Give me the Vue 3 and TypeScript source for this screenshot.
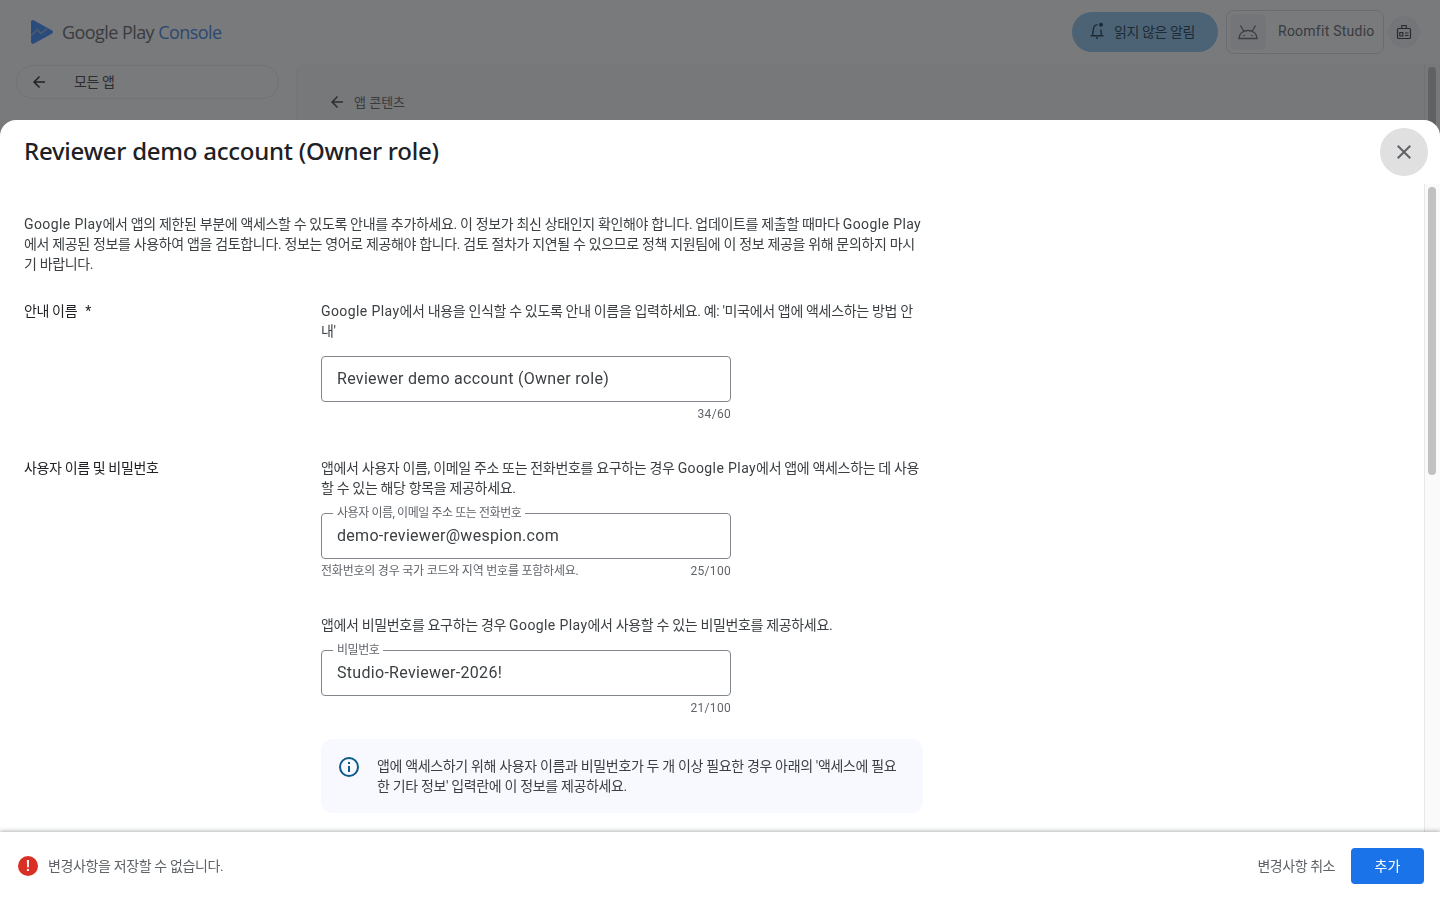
<script setup lang="ts">
interface Field {
  help: string
  label?: string
  value: string
  hint?: string
  count: string
}

const intro =
  'Google Play에서 앱의 제한된 부분에 액세스할 수 있도록 안내를 추가하세요. 이 정보가 최신 상태인지 확인해야 합니다. 업데이트를 제출할 때마다 Google Play에서 제공된 정보를 사용하여 앱을 검토합니다. 정보는 영어로 제공해야 합니다. 검토 절차가 지연될 수 있으므로 정책 지원팀에 이 정보 제공을 위해 문의하지 마시기 바랍니다.'

const nameField: Field = {
  help: "Google Play에서 내용을 인식할 수 있도록 안내 이름을 입력하세요. 예: '미국에서 앱에 액세스하는 방법 안\n내'",
  value: 'Reviewer demo account (Owner role)',
  count: '34/60',
}

const credentials: Field[] = [
  {
    help: '앱에서 사용자 이름, 이메일 주소 또는 전화번호를 요구하는 경우 Google Play에서 앱에 액세스하는 데 사용\n할 수 있는 해당 항목을 제공하세요.',
    label: '사용자 이름, 이메일 주소 또는 전화번호',
    value: 'demo-reviewer@wespion.com',
    hint: '전화번호의 경우 국가 코드와 지역 번호를 포함하세요.',
    count: '25/100',
  },
  {
    help: '앱에서 비밀번호를 요구하는 경우 Google Play에서 사용할 수 있는 비밀번호를 제공하세요.',
    label: '비밀번호',
    value: 'Studio-Reviewer-2026!',
    count: '21/100',
  },
]

// latin runs sit wider than the hangul around them, \n is a forced line end
function runs(text: string): string[] {
  return text.split(/(Google Play|\n)/u).filter(Boolean)
}
</script>

<template>
  <div class="page">
    <header class="topbar">
      <div class="brand">
        <svg class="brand-mark" width="24" height="26" viewBox="0 0 24 26" aria-hidden="true">
          <path d="M1 3.200C1 1.500 2.500.6 4 1.400L21.800 11.300C23.400 12.200 23.400 13.800 21.800 14.700L4 24.600C2.500 25.400 1 24.500 1 22.800Z" fill="#3a8cff" />
          <path d="M1 16.500 7.500 10.500 10.800 14.500 17 9.500" fill="none" stroke="#9fb3cc" stroke-width="1.400" />
        </svg>
        <span class="brand-name">Google Play <b>Console</b></span>
      </div>
      <div class="top-actions">
        <button class="alerts" type="button">
          <svg width="18" height="20" viewBox="0 0 18 20" fill="none" stroke="#17384f" stroke-width="1.400" aria-hidden="true">
            <path d="M4.500 14.500 5.500 7.500C5.800 5.500 7.500 3.800 9.500 3.600M12.800 8.500 13.500 14.500M2.500 14.700h13M8 17h2" />
            <circle cx="13" cy="3.800" r="2" fill="#17384f" stroke="none" />
          </svg>
          <span class="ko">읽지 않은 알림</span>
        </button>
        <div class="account">
          <span class="account-icon">
            <svg width="22" height="16" viewBox="0 0 22 16" fill="none" stroke="#68696c" stroke-width="1.300" aria-hidden="true">
              <path d="M2 14.500C2 9.500 6 6.500 11 6.500S20 9.500 20 14.500ZM3.500 1.500 7 7.500M18.500 1.500 15 7.500" />
              <circle cx="7" cy="11.500" r=".8" fill="#68696c" stroke="none" />
              <circle cx="15" cy="11.500" r=".8" fill="#68696c" stroke="none" />
            </svg>
          </span>
          <span class="account-name">Roomfit Studio</span>
        </div>
        <span class="badge-btn">
          <svg width="16" height="16" viewBox="0 0 16 16" fill="none" stroke="#37383b" stroke-width="1.200" aria-hidden="true">
            <rect x="1.500" y="4.500" width="13" height="10" rx="1" />
            <path d="M5.800 4.500V1.500h4.400v3M3.800 8.500h3v3.500h-3zM9 9h3.500M9 11.500h3.500" />
          </svg>
        </span>
      </div>
    </header>
    <div class="under">
      <aside class="side">
        <div class="all-apps">
          <svg width="18" height="18" viewBox="0 0 24 24" aria-hidden="true"><path d="M20 11H7.830l5.590-5.590L12 4l-8 8 8 8 1.410-1.410L7.830 13H20z" fill="#202124" /></svg>
          <span class="ko all-apps-text">모든 앱</span>
        </div>
      </aside>
      <main class="panel">
        <div class="crumb">
          <svg width="18" height="18" viewBox="0 0 24 24" aria-hidden="true"><path d="M20 11H7.830l5.590-5.590L12 4l-8 8 8 8 1.410-1.410L7.830 13H20z" fill="#3c4043" /></svg>
          <span>앱 콘텐츠</span>
        </div>
      </main>
      <div class="page-scroll"><span class="page-thumb" /></div>
    </div>
  </div>

  <div class="scrim" />

  <section class="dialog">
    <div class="dialog-head">
      <h1>Reviewer demo account (Owner role)</h1>
      <button class="close" type="button" aria-label="닫기">
        <svg width="24" height="24" viewBox="0 0 24 24" aria-hidden="true">
          <path d="M19 6.410 17.590 5 12 10.590 6.410 5 5 6.410 10.590 12 5 17.590 6.410 19 12 13.410 17.590 19 19 17.590 13.410 12Z" fill="#5f6368" />
        </svg>
      </button>
    </div>

    <div class="dialog-mid">
      <div class="dialog-body">
        <p class="intro">
          <template v-for="(r, i) in runs(intro)" :key="i"><span v-if="r === 'Google Play'" class="lat">{{ r }}</span><template v-else>{{ r }}</template></template>
        </p>

        <div class="row name-row">
          <div class="row-label">안내 이름<span class="req">*</span></div>
          <div class="row-fields">
            <p class="help">
              <template v-for="(r, i) in runs(nameField.help)" :key="i"><span v-if="r === 'Google Play'" class="lat">{{ r }}</span><br v-else-if="r === '\n'"><template v-else>{{ r }}</template></template>
            </p>
            <div class="input">{{ nameField.value }}</div>
            <div class="under-input"><span /><span class="count">{{ nameField.count }}</span></div>
          </div>
        </div>

        <div class="row">
          <div class="row-label">사용자 이름 및 비밀번호</div>
          <div class="row-fields">
            <div v-for="f in credentials" :key="f.value" class="cred">
              <p class="help">
                <template v-for="(r, i) in runs(f.help)" :key="i"><span v-if="r === 'Google Play'" class="lat">{{ r }}</span><br v-else-if="r === '\n'"><template v-else>{{ r }}</template></template>
              </p>
              <fieldset class="notched">
                <legend>{{ f.label }}</legend>
                <span class="notched-value">{{ f.value }}</span>
              </fieldset>
              <div class="under-input"><span>{{ f.hint }}</span><span class="count">{{ f.count }}</span></div>
            </div>
            <div class="notice">
              <svg width="24" height="24" viewBox="0 0 24 24" fill="none" aria-hidden="true">
                <circle cx="12" cy="12" r="9" stroke="#0b5a8a" stroke-width="2" />
                <path d="M11 11h2v6h-2zM11 7h2v2h-2z" fill="#0b5a8a" />
              </svg>
              <p>앱에 액세스하기 위해 사용자 이름과 비밀번호가 두 개 이상 필요한 경우 아래의 '액세스에 필요한 기타 정보' 입력란에 이 정보를 제공하세요.</p>
            </div>
          </div>
        </div>
      </div>
      <div class="dialog-scroll"><span class="dialog-thumb" /></div>
    </div>

    <footer class="dialog-foot">
      <div class="error">
        <span class="error-dot">!</span>
        <span>변경사항을 저장할 수 없습니다.</span>
      </div>
      <div class="foot-actions">
        <button class="discard" type="button">변경사항 취소</button>
        <button class="add" type="button">추가</button>
      </div>
    </footer>
  </section>
</template>

<style>
html,
body {
  height: 100%;
  overflow: hidden;
}
</style>

<style scoped>
.page {
  height: 900px;
  background: #fff;
  font-family: Roboto, "Noto Sans CJK KR", sans-serif;
  font-size: 14px;
  color: #202124;
}

.ko {
  letter-spacing: -0.4px;
}

.topbar {
  height: 64px;
  display: flex;
  align-items: center;
  justify-content: space-between;
  padding: 0 20px 0 30px;
}

.brand {
  display: flex;
  align-items: center;
  gap: 8px;
}

.brand-name {
  font-family: "Open Sans", sans-serif;
  font-size: 18px;
  letter-spacing: -0.56px;
  color: #5f6368;
}

.brand-name b {
  font-weight: 400;
  color: #3f7fe0;
}

.top-actions {
  display: flex;
  align-items: center;
  gap: 8px;
}

.alerts {
  width: 146px;
  height: 40px;
  border: 0;
  border-radius: 20px;
  background: #8ec5ee;
  display: flex;
  align-items: center;
  gap: 8px;
  padding: 0 0 2px 16px;
  font: inherit;
  color: #17384f;
}

.account {
  width: 158px;
  height: 44px;
  box-sizing: border-box;
  border: 1px solid #dadce0;
  border-radius: 8px;
  display: flex;
  align-items: center;
  gap: 12px;
  padding: 3px;
  color: #5f6368;
  letter-spacing: 0.25px;
}

.account-name {
  padding-bottom: 2px;
}

.account-icon {
  width: 36px;
  height: 36px;
  border-radius: 6px;
  background: #f1f3f4;
  display: flex;
  align-items: center;
  justify-content: center;
}

.account-icon,
.account-name {
  flex: none;
}

.badge-btn {
  width: 32px;
  height: 32px;
  margin-left: -4px;
  border-radius: 50%;
  background: #f1f3f4;
  display: flex;
  align-items: center;
  justify-content: center;
}

.under {
  display: flex;
  height: 836px;
}

.side {
  width: 296px;
  padding: 1px 17px 1px 16px;
  box-sizing: border-box;
}

.all-apps {
  height: 34px;
  box-sizing: border-box;
  border: 1px solid #e8eaed;
  border-radius: 17px;
  display: flex;
  align-items: center;
  gap: 26px;
  padding-left: 13px;
  color: #3c4043;
}

.all-apps-text {
  padding-bottom: 2px;
}

.panel {
  flex: 1;
  border-left: 1px solid #f6f6f6;
  border-top-left-radius: 8px;
  background: #fafafa;
  padding: 28px 31px;
  font-size: 13px;
  color: #5f6368;
}

.crumb {
  display: flex;
  align-items: center;
  gap: 8px;
}

.page-scroll {
  width: 15px;
  border-left: 1px solid #e8e8e8;
  background: #fafafa;
}

.page-thumb {
  display: block;
  width: 8px;
  height: 300px;
  margin: 3px 3px;
  border-radius: 4px;
  background: #c1c1c1;
}

.scrim {
  position: fixed;
  inset: 0;
  background: rgba(32, 33, 36, 0.6);
}

.dialog {
  position: fixed;
  inset: 120px 0 0;
  display: flex;
  flex-direction: column;
  background: #fff;
  border-radius: 16px 16px 0 0;
  font-family: Roboto, "Noto Sans CJK KR", sans-serif;
  font-size: 14px;
  line-height: 20px;
  color: #3c4043;
  letter-spacing: -0.34px;
}

.lat {
  letter-spacing: 0.4px;
}

.dialog-head {
  height: 64px;
  flex: none;
  display: flex;
  justify-content: space-between;
  padding: 8px 12px 0 24px;
  box-sizing: border-box;
}

.dialog-head h1 {
  margin: 7px 0 0;
  font-family: "Noto Sans", sans-serif;
  font-size: 24px;
  line-height: 32px;
  font-weight: 500;
  letter-spacing: -0.25px;
  color: #202124;
}

.close {
  width: 48px;
  height: 48px;
  border: 0;
  border-radius: 50%;
  background: #e0e0e0;
  display: flex;
  align-items: center;
  justify-content: center;
  padding: 0;
}

.dialog-mid {
  flex: 1;
  min-height: 0;
  display: flex;
  overflow: hidden;
}

.dialog-body {
  flex: 1;
  padding: 30px 0 0 24px;
}

.intro {
  width: 899px;
  margin: 0 0 27px;
}

.row {
  display: flex;
  width: 899px;
}

.name-row {
  margin-bottom: 36px;
}

.row-label {
  width: 297px;
  flex: none;
  color: #202124;
  letter-spacing: -0.37px;
}

.req {
  margin-left: 8px;
}

.row-fields {
  width: 602px;
}

.help {
  margin: 0 0 15px;
}

.cred {
  margin-bottom: 36px;
}

.cred:nth-last-child(2) {
  margin-bottom: 23px;
}

.input {
  width: 410px;
  height: 46px;
  box-sizing: border-box;
  border: 1px solid #80868b;
  border-radius: 4px;
  padding: 0 15px;
  display: flex;
  align-items: center;
  font-size: 16px;
  letter-spacing: 0.3px;
  color: #3c4043;
}

/* the legend centres on the top border, so the box starts 8px above it */
.notched {
  display: block;
  width: 410px;
  height: 54px;
  box-sizing: border-box;
  min-width: 0;
  margin: -8px 0 0;
  border: 1px solid #80868b;
  border-radius: 4px;
  padding: 0 15px;
}

.notched legend {
  margin-left: -4px;
  padding: 0 4px;
  font-size: 12px;
  line-height: 16px;
  color: #5f6368;
  letter-spacing: -0.43px;
}

.notched-value {
  display: block;
  line-height: 24px;
  margin-top: 3px;
  font-size: 16px;
  letter-spacing: 0.3px;
  color: #3c4043;
}

.under-input {
  width: 410px;
  height: 16px;
  margin-top: 4px;
  display: flex;
  justify-content: space-between;
  font-size: 12px;
  line-height: 16px;
  color: #5f6368;
  letter-spacing: -0.22px;
}

.count {
  letter-spacing: 0.3px;
}

.notice {
  width: 602px;
  height: 74px;
  box-sizing: border-box;
  border-radius: 12px;
  background: #f8f9fe;
  display: flex;
  gap: 16px;
  padding: 16px;
}

.notice svg {
  flex: none;
}

.notice p {
  margin: 1px 0 0;
}

.dialog-scroll {
  width: 15px;
  flex: none;
  border-left: 1px solid #e8e8e8;
  background: #fafafa;
}

.dialog-thumb {
  display: block;
  width: 8px;
  height: 288px;
  margin: 3px 3px;
  border-radius: 4px;
  background: #c1c1c1;
}

.dialog-foot {
  height: 68px;
  flex: none;
  box-sizing: border-box;
  background: #fff;
  box-shadow: 0 -1px 4px rgba(60, 64, 67, 0.4);
  display: flex;
  align-items: center;
  justify-content: space-between;
  padding: 0 16px 0 18px;
  position: relative;
  letter-spacing: -0.37px;
}

.error {
  display: flex;
  align-items: center;
  gap: 10px;
  color: #5f6368;
}

.error-dot {
  width: 20px;
  height: 20px;
  border-radius: 50%;
  background: #d93025;
  color: #fff;
  font-weight: 700;
  font-size: 14px;
  letter-spacing: 0;
  text-align: center;
}

.foot-actions {
  display: flex;
  align-items: center;
  gap: 16px;
}

.discard {
  height: 36px;
  border: 0;
  background: none;
  padding: 0;
  font: inherit;
  letter-spacing: -0.45px;
  color: #5f6368;
}

.add {
  width: 73px;
  height: 36px;
  border: 0;
  border-radius: 4px;
  background: #1a73e8;
  color: #fff;
  font: inherit;
  letter-spacing: 0;
}
</style>
